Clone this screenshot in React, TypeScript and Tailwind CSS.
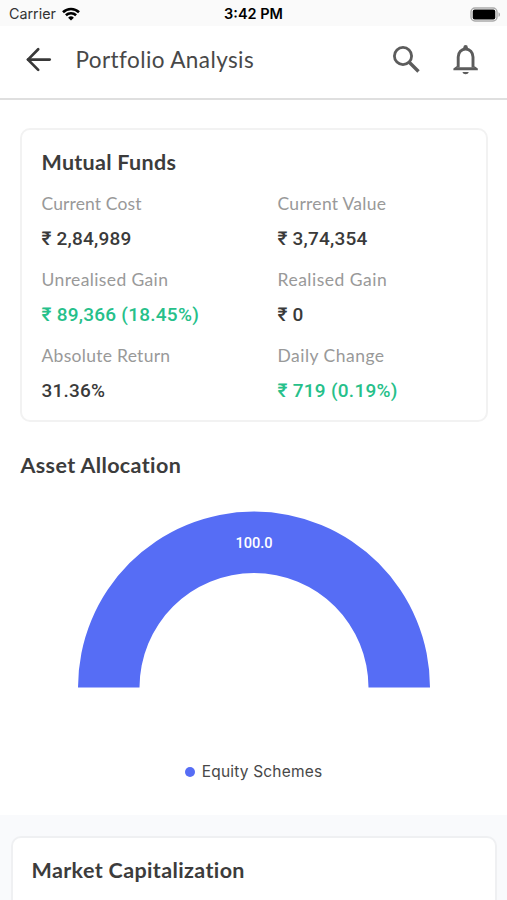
import React from "react";

type Metric = {
  label: string;
  value: string;
  gain?: boolean;
  labelClass: string;
  valueClass: string;
};

const metrics: Metric[] = [
  { label: "Current Cost", value: "₹ 2,84,989", labelClass: "tracking-[0.13px]", valueClass: "tracking-[0.2px]" },
  { label: "Current Value", value: "₹ 3,74,354", labelClass: "tracking-[0.29px]", valueClass: "tracking-[0.2px]" },
  { label: "Unrealised Gain", value: "₹ 89,366 (18.45%)", gain: true, labelClass: "tracking-[0.38px]", valueClass: "tracking-[0.25px]" },
  { label: "Realised Gain", value: "₹ 0", labelClass: "tracking-[0.5px]", valueClass: "tracking-[0.2px]" },
  { label: "Absolute Return", value: "31.36%", labelClass: "tracking-[0.28px]", valueClass: "tracking-[0.2px]" },
  { label: "Daily Change", value: "₹ 719 (0.19%)", gain: true, labelClass: "tracking-[0.48px]", valueClass: "tracking-[0.28px]" },
];

const StatusBar = () => (
  <div className="grid h-[26px] grid-cols-3 items-center bg-[#fafafa] font-['Inter',sans-serif] text-black">
    <div className="flex items-center pl-[9px]">
      <span className="w-[53px] text-[14.3px] leading-[28px] whitespace-nowrap text-[#333]">Carrier</span>
      <svg width="18" height="14" viewBox="0 0 18 14" fill="none" stroke="#000" strokeWidth="2.6">
        <path d="M1 5.2a11.6 11.6 0 0 1 16 0" />
        <path d="M3.9 8.3a7.4 7.4 0 0 1 10.2 0" />
        <path d="M9 13.6 6.1 10.7a4.2 4.2 0 0 1 5.8 0z" fill="#000" stroke="none" />
      </svg>
    </div>
    <span className="text-center text-[14.5px] font-semibold leading-[28px] whitespace-nowrap">3:42 PM</span>
    <div className="flex justify-end pr-[6px]">
      <svg width="31" height="15" viewBox="0 0 31 15">
        <rect x="1" y="1" width="26" height="13" rx="4" fill="#fff" stroke="#aaa" strokeWidth="1.4" />
        <rect x="2.7" y="2.5" width="22.6" height="10" rx="2" fill="#000" />
        <path d="M28.5 5.2c2 .8 2 3.8 0 4.6z" fill="#aaa" />
      </svg>
    </div>
  </div>
);

const Header = () => (
  <header className="flex h-[74px] items-center border-b-2 border-[#dfdfdf] bg-white pl-[26px] pr-[28px] pb-[4px]">
    <svg width="26" height="26" viewBox="0 0 26 26" fill="none" stroke="#383838" strokeWidth="2.7" strokeLinecap="round" strokeLinejoin="round">
      <path d="M23.7 12.6H2" />
      <path d="M12.2 2.3 2 12.6l10.2 10.3" />
    </svg>
    <h1 className="ml-[23.5px] flex-1 font-['Lato',sans-serif] text-[22.5px] tracking-[0.41px] whitespace-nowrap text-[#484848]">
      Portfolio Analysis
    </h1>
    <svg width="28" height="28" viewBox="0 0 28 28" fill="none" stroke="#5c5c5c" strokeWidth="2.8">
      <circle cx="10" cy="10" r="8.6" />
      <path d="M16 16l9.5 9.5" strokeWidth="3.3" />
    </svg>
    <svg className="ml-[32px]" width="26" height="32" viewBox="0 0 26 32" fill="none" stroke="#5c5c5c" strokeWidth="2.9">
      <path d="M10.4 5V3.3a2.2 2.2 0 0 1 4.4 0V5z" fill="#5c5c5c" stroke="none" />
      <path d="M5.2 23.5V13a7.4 8 0 0 1 14.8 0v10.5" />
      <path d="M.4 26.2v-1.6l3.5-2.6v1.3h17.4V22l3.5 2.6v1.6z" fill="#5c5c5c" stroke="none" />
      <path d="M9.5 28h6.2c-.5 3-5.7 3-6.2 0z" fill="#5c5c5c" stroke="none" />
    </svg>
  </header>
);

const MetricItem = ({ label, value, gain, labelClass, valueClass }: Metric) => (
  <div className="h-[76px] whitespace-nowrap">
    <p className={`font-['Lato',sans-serif] text-[17.5px] leading-[24px] text-[#999] ${labelClass}`}>{label}</p>
    <p
      className={`mt-[10px] font-['Roboto',sans-serif] text-[19px] font-medium leading-[26px] ${valueClass} ${
        gain ? "text-[#26c08a]" : "text-[#3a3a3a]"
      }`}
    >
      {value}
    </p>
  </div>
);

const MutualFundsCard = () => (
  <section className="ml-[20px] mr-[19px] mt-[28px] h-[294px] shrink-0 rounded-[10px] border-2 border-[#f2f2f2] pt-[17px] pl-[19.5px]">
    <h2 className="font-['Lato',sans-serif] text-[21.5px] font-bold leading-[30px] tracking-[0.29px] text-[#3c3c3c]">
      Mutual Funds
    </h2>
    <div className="mt-[15px] grid grid-cols-[236px_1fr]">
      {metrics.map((metric) => (
        <MetricItem key={metric.label} {...metric} />
      ))}
    </div>
  </section>
);

const AssetAllocation = () => (
  <section className="shrink-0 pb-[31px]">
    <h2 className="mt-[27px] ml-[20.5px] font-['Lato',sans-serif] text-[21.5px] font-bold leading-[32px] tracking-[0.37px] text-[#3c3c3c]">
      Asset Allocation
    </h2>
    {/* Half donut, a single slice at 100% */}
    <svg className="mx-auto mt-[30px] block" width="352" height="177" viewBox="0 0 352 177">
      <path d="M0 176.5a176 176 0 0 1 352 0h-61.5a114.5 114.5 0 0 0-229 0z" fill="#566df5" />
      <text x="176" y="36.5" textAnchor="middle" fill="#fff" className="font-['Roboto',sans-serif] text-[14.6px] font-medium">
        100.0
      </text>
    </svg>
    <div className="mt-[72px] flex h-[24px] items-center justify-center gap-[7px]">
      <span className="size-[10px] rounded-full bg-[#566df5]" />
      <span className="font-['Inter',sans-serif] text-[15.5px] tracking-[0.18px] whitespace-nowrap text-[#484848]">Equity Schemes</span>
    </div>
  </section>
);

const MarketCapitalization = () => (
  <section className="h-[85px] shrink-0 overflow-hidden bg-[#f9fafc] pl-[11px] pr-[10px] pt-[21px]">
    <div className="h-[120px] rounded-[10px] border-2 border-[#eff0f2] bg-white pt-[16px] pl-[18.5px]">
      <h2 className="font-['Lato',sans-serif] text-[21.5px] font-bold leading-[32px] tracking-[0.37px] text-[#3c3c3c]">
        Market Capitalization
      </h2>
    </div>
  </section>
);

export default function App() {
  return (
    <main className="flex h-[900px] w-[507px] flex-col overflow-hidden bg-white">
      <StatusBar />
      <Header />
      <MutualFundsCard />
      <AssetAllocation />
      <MarketCapitalization />
    </main>
  );
}
